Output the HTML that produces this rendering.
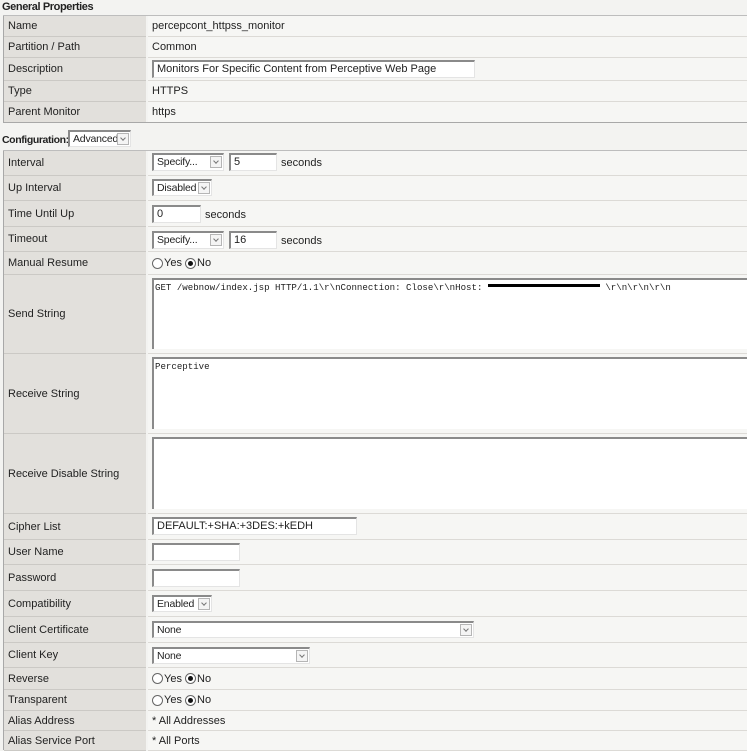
<!DOCTYPE html>
<html><head><style>
body{margin:0;width:747px;height:750px;overflow:hidden;background:#f3f3f1;font-family:"Liberation Sans",Arial,sans-serif;font-size:11px;color:#222;position:relative}
.a{position:absolute}
.lab{position:absolute;left:4px;width:142px;background:#e2e0dc;border-bottom:1px solid #cbc9c5;box-sizing:border-box;padding-left:4px;display:flex;align-items:center}
.val{position:absolute;left:148px;right:0;background:#f6f6f4;border-bottom:1px solid #dcdad6;box-sizing:border-box;padding-left:4px;display:flex;align-items:center}
.in{position:absolute;background:#fff;border-top:2px solid #8a8a8a;border-left:2px solid #8a8a8a;border-right:1px solid #e4e4e4;border-bottom:1px solid #e4e4e4;box-sizing:border-box;padding-left:3px;line-height:15px;white-space:nowrap;overflow:hidden}
.sel{font-size:10.5px;letter-spacing:-0.2px}
.sel .ar{position:absolute;right:1px;top:1px;width:12px;height:12px;border:1px solid #b5b5b5;background:#f4f4f4;box-sizing:border-box}
.sel .ar:after{content:"";position:absolute;left:3px;top:2px;width:3px;height:3px;border-right:1px solid #777;border-bottom:1px solid #777;transform:rotate(45deg)}
.ta{position:absolute;left:152px;right:0;background:#fff;border-top:2px solid #8a8a8a;border-left:2px solid #8a8a8a;box-sizing:border-box;font-family:"Liberation Mono",monospace;font-size:9.1px;padding:2px 1px;white-space:nowrap;overflow:hidden}
.r{display:inline-block;width:9px;height:9px;border:1px solid #666;border-radius:50%;background:#fff;vertical-align:-2px;position:relative;margin-right:1px}
.r.on:after{content:"";position:absolute;left:2px;top:2px;width:5px;height:5px;border-radius:50%;background:#111}
.vline{position:absolute;left:3px;width:1px;background:#a8a8a8}
b{letter-spacing:-0.4px}
</style></head><body>
<div class="a" style="left:2px;top:1px"><b>General Properties</b></div>
<div class="vline" style="top:15px;height:108px"></div>
<div class="a" style="left:3px;top:15px;right:0;height:1px;background:#bdbdbd"></div>
<div class="lab" style="top:16px;height:21px">Name</div><div class="val" style="top:16px;height:21px">percepcont_httpss_monitor</div>
<div class="lab" style="top:37px;height:21px">Partition / Path</div><div class="val" style="top:37px;height:21px">Common</div>
<div class="lab" style="top:58px;height:23px">Description</div><div class="val" style="top:58px;height:23px"></div>
<div class="in" style="left:152px;top:60px;width:323px;height:18px">Monitors For Specific Content from Perceptive Web Page</div>
<div class="lab" style="top:81px;height:21px">Type</div><div class="val" style="top:81px;height:21px">HTTPS</div>
<div class="lab" style="top:102px;height:21px">Parent Monitor</div><div class="val" style="top:102px;height:21px">https</div>
<div class="a" style="left:3px;top:122px;right:0;height:1px;background:#a8a8a8"></div>

<div class="a" style="left:2px;top:134px;font-size:10.5px"><b>Configuration:</b></div>
<div class="in sel" style="left:68px;top:130px;width:63px;height:17px">Advanced<span class="ar"></span></div>

<div class="vline" style="top:150px;height:600px"></div>
<div class="a" style="left:3px;top:150px;right:0;height:1px;background:#bdbdbd"></div>
<div class="lab" style="top:151px;height:25px">Interval</div><div class="val" style="top:151px;height:25px"></div>
<div class="in sel" style="left:152px;top:153px;width:72px;height:18px">Specify...<span class="ar"></span></div>
<div class="in" style="left:229px;top:153px;width:48px;height:18px">5</div>
<div class="a" style="left:281px;top:157px">seconds</div>
<div class="lab" style="top:176px;height:25px">Up Interval</div><div class="val" style="top:176px;height:25px"></div>
<div class="in sel" style="left:152px;top:179px;width:60px;height:17px">Disabled<span class="ar"></span></div>
<div class="lab" style="top:201px;height:26px">Time Until Up</div><div class="val" style="top:201px;height:26px"></div>
<div class="in" style="left:152px;top:205px;width:49px;height:18px">0</div>
<div class="a" style="left:205px;top:209px">seconds</div>
<div class="lab" style="top:227px;height:25px">Timeout</div><div class="val" style="top:227px;height:25px"></div>
<div class="in sel" style="left:152px;top:231px;width:72px;height:18px">Specify...<span class="ar"></span></div>
<div class="in" style="left:229px;top:231px;width:48px;height:18px">16</div>
<div class="a" style="left:281px;top:235px">seconds</div>
<div class="lab" style="top:252px;height:23px">Manual Resume</div><div class="val" style="top:252px;height:23px"><span class="r"></span>Yes&nbsp;<span class="r on"></span>No</div>
<div class="lab" style="top:275px;height:79px">Send String</div><div class="val" style="top:275px;height:79px"></div>
<div class="ta" style="top:278px;height:71px">GET /webnow/index.jsp HTTP/1.1\r\nConnection: Close\r\nHost: <span style="display:inline-block;width:112px;height:3px;background:#000;vertical-align:3px"></span> \r\n\r\n\r\n</div>
<div class="lab" style="top:354px;height:80px">Receive String</div><div class="val" style="top:354px;height:80px"></div>
<div class="ta" style="top:357px;height:72px">Perceptive</div>
<div class="lab" style="top:434px;height:80px">Receive Disable String</div><div class="val" style="top:434px;height:80px"></div>
<div class="ta" style="top:437px;height:72px"></div>
<div class="lab" style="top:514px;height:26px">Cipher List</div><div class="val" style="top:514px;height:26px"></div>
<div class="in" style="left:152px;top:517px;width:205px;height:18px">DEFAULT:+SHA:+3DES:+kEDH</div>
<div class="lab" style="top:540px;height:25px">User Name</div><div class="val" style="top:540px;height:25px"></div>
<div class="in" style="left:152px;top:543px;width:88px;height:18px"></div>
<div class="lab" style="top:565px;height:26px">Password</div><div class="val" style="top:565px;height:26px"></div>
<div class="in" style="left:152px;top:569px;width:88px;height:18px"></div>
<div class="lab" style="top:591px;height:26px">Compatibility</div><div class="val" style="top:591px;height:26px"></div>
<div class="in sel" style="left:152px;top:595px;width:60px;height:17px">Enabled<span class="ar"></span></div>
<div class="lab" style="top:617px;height:26px">Client Certificate</div><div class="val" style="top:617px;height:26px"></div>
<div class="in sel" style="left:152px;top:621px;width:322px;height:17px">None<span class="ar"></span></div>
<div class="lab" style="top:643px;height:25px">Client Key</div><div class="val" style="top:643px;height:25px"></div>
<div class="in sel" style="left:152px;top:647px;width:158px;height:17px">None<span class="ar"></span></div>
<div class="lab" style="top:668px;height:22px">Reverse</div><div class="val" style="top:668px;height:22px"><span class="r"></span>Yes&nbsp;<span class="r on"></span>No</div>
<div class="lab" style="top:690px;height:21px">Transparent</div><div class="val" style="top:690px;height:21px"><span class="r"></span>Yes&nbsp;<span class="r on"></span>No</div>
<div class="lab" style="top:711px;height:20px">Alias Address</div><div class="val" style="top:711px;height:20px">* All Addresses</div>
<div class="lab" style="top:731px;height:20px">Alias Service Port</div><div class="val" style="top:731px;height:20px">* All Ports</div>
</body></html>
